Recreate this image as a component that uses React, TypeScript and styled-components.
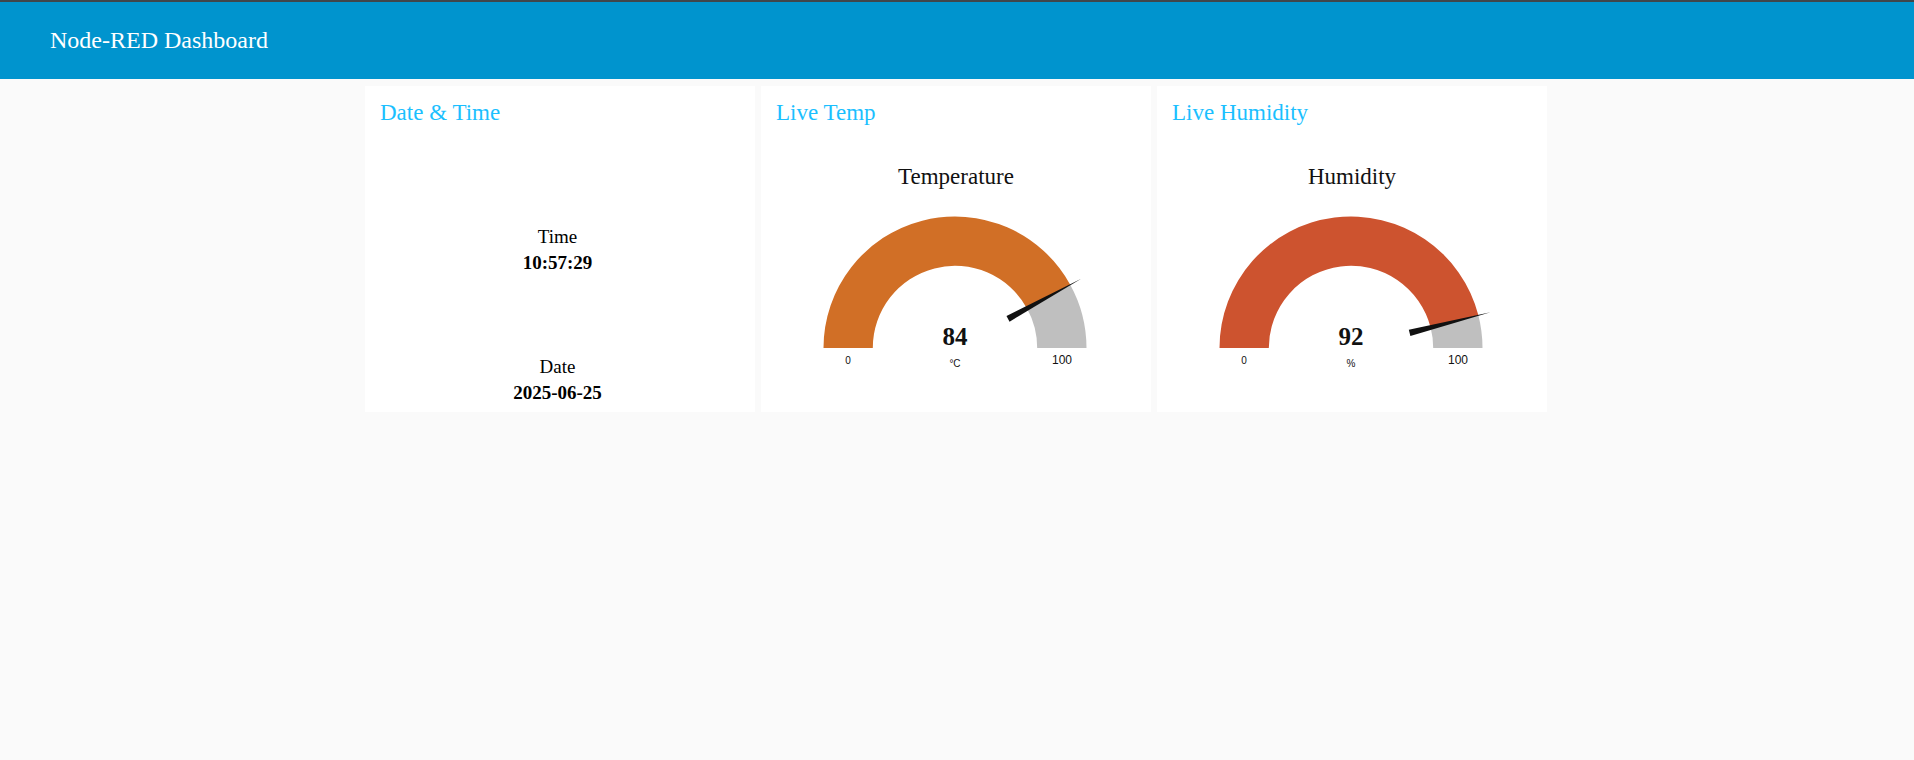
import React from "react";
import styled, { createGlobalStyle } from "styled-components";

const GlobalStyle = createGlobalStyle`
  body {
    margin: 0;
    background: #fafafa;
    color: #111111;
    font-family: "Liberation Serif", "Times New Roman", serif;
  }
`;

const Toolbar = styled.header`
  display: flex;
  align-items: center;
  box-sizing: border-box;
  height: 79px;
  padding: 0 50px 2px;
  border-top: 2px solid #40464b;
  background: #0094ce;
  color: #ffffff;
`;

const ToolbarTitle = styled.h1`
  margin: 0;
  font-size: 24px;
  font-weight: 500;
  line-height: 28px;
`;

const Board = styled.main`
  display: grid;
  grid-template-columns: repeat(auto-fit, 390px);
  justify-content: center;
  gap: 6px;
  max-width: 1190px;
  margin: 0 auto;
  padding: 7px 2px 7px 0;
`;

const Card = styled.section`
  display: flex;
  flex-direction: column;
  min-height: 326px;
  box-sizing: border-box;
  background: #ffffff;
`;

const CardTitle = styled.h2`
  margin: 0;
  padding: 14px 15px 0;
  color: #1bbfff;
  font-size: 23px;
  font-weight: 400;
  line-height: 26px;
`;

const Readings = styled.dl`
  flex: 1;
  display: flex;
  flex-direction: column;
  justify-content: flex-end;
  gap: 78px;
  margin: 0;
  padding: 0 5px 6px 0;
`;

const Reading = styled.div`
  color: #000000;
  font-size: 19px;
  line-height: 26px;
  text-align: center;
`;

const ReadingLabel = styled.dt`
  font-weight: 400;
`;

const ReadingValue = styled.dd`
  margin: 0;
  font-weight: 700;
`;

const GaugeFigure = styled.figure`
  margin: 0;
  padding-top: 38px;
`;

const GaugeTitle = styled.figcaption`
  font-size: 23px;
  line-height: 26px;
  text-align: center;
`;

const GaugeDrawing = styled.svg`
  display: block;
  width: 100%;
  height: 222px;
`;

const GaugeValue = styled.text`
  fill: #111111;
  font-size: 25px;
  font-weight: 700;
  text-anchor: middle;
`;

const GaugeLabel = styled.text<{ $size: number }>`
  fill: #111111;
  font-family: "Liberation Sans", Arial, sans-serif;
  font-size: ${(p) => p.$size}px;
  text-anchor: middle;
`;

const CX = 194;
const CY = 158;
const OUTER = 131.5;
const INNER = 82.2;

// Half-ring segment between two fractions of the dial, left to right.
function ring(from: number, to: number) {
  const at = (r: number, f: number) => {
    const a = Math.PI * (1 - f);
    return `${CX + r * Math.cos(a)} ${CY - r * Math.sin(a)}`;
  };
  return `M${at(INNER, from)} L${at(OUTER, from)} A${OUTER} ${OUTER} 0 0 1 ${at(OUTER, to)} L${at(INNER, to)} A${INNER} ${INNER} 0 0 0 ${at(INNER, from)} Z`;
}

type GaugeProps = { title: string; value: number; unit: string; color: string };

function Gauge({ title, value, unit, color }: GaugeProps) {
  const share = value / 100;
  return (
    <GaugeFigure>
      <GaugeTitle>{title}</GaugeTitle>
      <GaugeDrawing viewBox="0 0 390 222" role="img" aria-label={`${title} ${value} ${unit}`}>
        <path d={ring(share, 1)} fill="#bfbfbf" />
        <path d={ring(0, share)} fill={color} />
        <path
          d={`M${CX + 60.5} ${CY - 3.2} L${CX + 144} ${CY} L${CX + 60.5} ${CY + 3.2} Z`}
          transform={`rotate(${-180 * (1 - share)} ${CX} ${CY})`}
          fill="#111111"
        />
        <GaugeValue x={CX} y={155}>{value}</GaugeValue>
        <GaugeLabel $size={10} x={CX} y={177}>{unit}</GaugeLabel>
        <GaugeLabel $size={10} x={87} y={174}>0</GaugeLabel>
        <GaugeLabel $size={12} x={301} y={174}>100</GaugeLabel>
      </GaugeDrawing>
    </GaugeFigure>
  );
}

const readings = [
  { label: "Time", value: "10:57:29" },
  { label: "Date", value: "2025-06-25" },
];

export default function App() {
  return (
    <>
      <GlobalStyle />
      <Toolbar>
        <ToolbarTitle>Node-RED Dashboard</ToolbarTitle>
      </Toolbar>
      <Board>
        <Card>
          <CardTitle>Date &amp; Time</CardTitle>
          <Readings>
            {readings.map((r) => (
              <Reading key={r.label}>
                <ReadingLabel>{r.label}</ReadingLabel>
                <ReadingValue>{r.value}</ReadingValue>
              </Reading>
            ))}
          </Readings>
        </Card>
        <Card>
          <CardTitle>Live Temp</CardTitle>
          <Gauge title="Temperature" value={84} unit="°C" color="#d16f26" />
        </Card>
        <Card>
          <CardTitle>Live Humidity</CardTitle>
          <Gauge title="Humidity" value={92} unit="%" color="#cd532f" />
        </Card>
      </Board>
    </>
  );
}
